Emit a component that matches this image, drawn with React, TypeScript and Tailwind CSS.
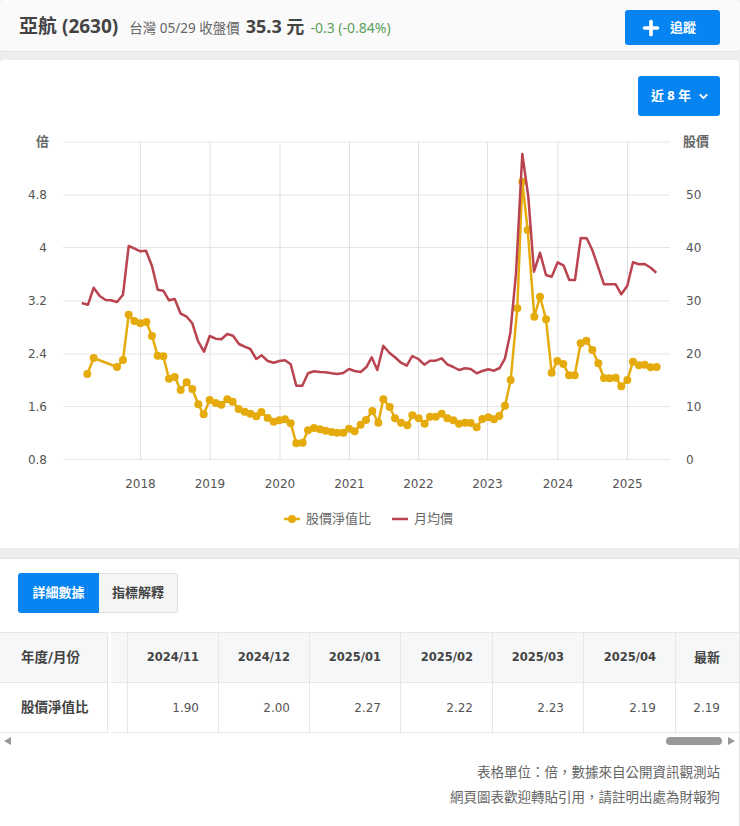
import { ChevronDown, Plus } from "lucide-react";

const cjk = "font-['DejaVu_Sans','Noto_Sans_CJK_TC',sans-serif]";

// traced from the chart, [x, y] in px
const left = (pts: number[][]) => pts.map(([x, y]) => [x / 3, 120 + y / 3]);
const right = (pts: number[][]) => pts.map(([x, y]) => [370 + x / 3, 120 + y / 3]);

const priceLine = [
  ...left([
    [245, 549], [264, 554], [281, 503], [299, 528], [317, 540], [333, 541], [351, 546], [369, 524], [386, 378], [404, 386],
    [421, 394], [438, 392], [456, 438], [473, 509], [490, 512], [507, 541], [524, 537], [542, 581], [560, 590], [577, 610],
    [594, 663], [612, 695], [629, 648], [647, 656], [664, 658], [682, 642], [699, 647], [717, 672], [734, 680], [751, 687],
    [769, 717], [785, 706], [803, 723], [821, 728], [838, 723], [855, 721], [872, 733], [889, 797], [907, 797], [924, 760],
    [942, 754], [960, 756], [977, 757], [995, 760], [1012, 762], [1030, 759], [1047, 747], [1064, 753], [1082, 756], [1100, 740],
  ]),
  ...right([
    [5, 712], [22, 750], [40, 677], [58, 698], [75, 712], [93, 728], [110, 737], [127, 708], [145, 717], [163, 734],
    [180, 722], [197, 722], [215, 715], [232, 733], [250, 741], [267, 750], [285, 745], [302, 747], [320, 760], [337, 753],
    [355, 748], [372, 752], [389, 744], [405, 715], [421, 640], [438, 460], [457, 102], [475, 230], [492, 455], [510, 398],
    [528, 465], [545, 470], [563, 427], [581, 437], [598, 480], [615, 480], [632, 354], [650, 355], [667, 390], [684, 440],
    [702, 493], [719, 493], [737, 493], [754, 523], [772, 497], [789, 427], [807, 433], [824, 432], [842, 443], [859, 458],
  ]),
];

const pbLine = [
  ...left([
    [262, 762], [281, 714], [351, 741], [369, 720], [386, 584], [403, 603], [421, 610], [439, 606], [456, 648], [473, 707],
    [490, 709], [507, 776], [524, 771], [542, 810], [560, 787], [577, 807], [595, 853], [611, 883], [629, 840], [647, 849],
    [664, 854], [682, 838], [698, 845], [716, 867], [734, 875], [751, 881], [769, 889], [784, 876], [803, 894], [821, 905],
    [838, 901], [855, 898], [872, 910], [889, 970], [908, 968], [924, 931], [942, 924], [960, 928], [977, 932], [995, 936],
    [1012, 938], [1030, 938], [1047, 926], [1064, 934], [1082, 914], [1098, 900],
  ]),
  ...right([
    [7, 873], [25, 908], [40, 838], [59, 861], [75, 895], [93, 908], [112, 916], [127, 886], [146, 895], [164, 911],
    [180, 890], [197, 890], [215, 881], [232, 895], [250, 901], [267, 911], [285, 908], [302, 909], [320, 922], [337, 897],
    [355, 892], [372, 898], [388, 888], [405, 857], [422, 780], [442, 565], [457, 185], [473, 330], [493, 590], [510, 530],
    [528, 598], [545, 758], [562, 723], [580, 732], [597, 766], [614, 766], [632, 670], [649, 662], [667, 690], [685, 730],
    [702, 774], [719, 775], [737, 773], [754, 799], [772, 780], [789, 725], [807, 736], [824, 734], [842, 742], [860, 741],
  ]),
];

const toPoints = (pts: number[][]) => pts.map(([x, y]) => `${x.toFixed(1)},${y.toFixed(1)}`).join(" ");

const gridY = [142, 195, 247.5, 301, 354, 406.5, 459.5];
const leftTicks = [
  ["4.8", 195], ["4", 247.5], ["3.2", 301], ["2.4", 354], ["1.6", 406.5], ["0.8", 459.5],
] as const;
const rightTicks = [
  ["50", 195], ["40", 247.5], ["30", 301], ["20", 354], ["10", 406.5], ["0", 459.5],
] as const;
const years = [
  ["2018", 140.5], ["2019", 210], ["2020", 280], ["2021", 349.5],
  ["2022", 418.5], ["2023", 487.5], ["2024", 558], ["2025", 627.5],
] as const;

const PbChart = () => (
  <svg viewBox="0 124 740 424" width={740} height={424} className="block" fontFamily="'DejaVu Sans','Noto Sans CJK TC',sans-serif">
    {gridY.map((y) => (
      <line key={y} x1={63} x2={670} y1={y} y2={y} stroke="#e6e6e6" strokeWidth={1} />
    ))}
    {years.map(([label, x]) => (
      <g key={label}>
        <line x1={x} x2={x} y1={142} y2={459.5} stroke="#e0e0e6" strokeWidth={1} />
        <text x={x} y={488} textAnchor="middle" fontSize={12} fill="#555">{label}</text>
      </g>
    ))}
    <text x={49} y={146} textAnchor="end" fontSize={13} fontWeight={700} fill="#666">倍</text>
    <text x={683} y={146} fontSize={13} fontWeight={700} fill="#666">股價</text>
    {leftTicks.map(([label, y]) => (
      <text key={label} x={47} y={y + 4} textAnchor="end" fontSize={12} fill="#555">{label}</text>
    ))}
    {rightTicks.map(([label, y]) => (
      <text key={label} x={686} y={y + 4} fontSize={12} fill="#555">{label}</text>
    ))}
    <polyline points={toPoints(pbLine)} fill="none" stroke="#e5ab0c" strokeWidth={2.5} strokeLinejoin="round" />
    {pbLine.map(([x, y]) => (
      <circle key={`${x}-${y}`} cx={x} cy={y} r={4} fill="#e5ab0c" />
    ))}
    <polyline points={toPoints(priceLine)} fill="none" stroke="#b9434f" strokeWidth={2.5} strokeLinejoin="round" />
    <line x1={284} x2={300} y1={519} y2={519} stroke="#e5ab0c" strokeWidth={2.5} />
    <circle cx={292} cy={519} r={4} fill="#e5ab0c" />
    <text x={306} y={523} fontSize={13} fill="#666">股價淨值比</text>
    <line x1={392} x2={408} y1={519} y2={519} stroke="#b9434f" strokeWidth={2.5} />
    <text x={414} y={523} fontSize={13} fill="#666">月均價</text>
  </svg>
);

const columns = [
  { head: "2024/11", value: "1.90", w: "w-[91px]" },
  { head: "2024/12", value: "2.00", w: "w-[91px]" },
  { head: "2025/01", value: "2.27", w: "w-[91px]" },
  { head: "2025/02", value: "2.22", w: "w-[92px]" },
  { head: "2025/03", value: "2.23", w: "w-[91px]" },
  { head: "2025/04", value: "2.19", w: "w-[92px]" },
];

const DataTable = () => (
  <div className="flex w-full text-[#444]">
    <div className="w-[108px] shrink-0 border-r border-[#e6e6e6]">
      <div className="h-[51px] flex items-center pl-[21px] bg-[#f6f7f8] border-y border-[#e6e6e6] text-[13.5px] font-bold">年度/月份</div>
      <div className="h-[50px] flex items-center pl-[21px] border-b border-[#e6e6e6] text-[13.5px] font-bold">股價淨值比</div>
    </div>
    <div className="ml-[3px] w-[17px] shrink-0 border-r border-[#e6e6e6]">
      <div className="h-[51px] bg-[#f6f7f8] border-y border-[#e6e6e6]" />
      <div className="h-[50px] border-b border-[#e6e6e6]" />
    </div>
    {columns.map((col) => (
      <div key={col.head} className={`${col.w} shrink-0 border-r border-[#e6e6e6]`}>
        <div className="h-[51px] flex items-center justify-end pr-[19px] bg-[#f6f7f8] border-y border-[#e6e6e6] text-[11.5px] font-bold">{col.head}</div>
        <div className="h-[50px] flex items-center justify-end pr-[19px] border-b border-[#e6e6e6] text-[12px] text-[#555]">{col.value}</div>
      </div>
    ))}
    <div className="flex-1">
      <div className="h-[51px] flex items-center justify-end pr-[19px] bg-[#f6f7f8] border-y border-[#e6e6e6] text-[13px] font-bold">最新</div>
      <div className="h-[50px] flex items-center justify-end pr-[19px] border-b border-[#e6e6e6] text-[12px] text-[#555]">2.19</div>
    </div>
  </div>
);

const App = () => {
  return (
    <div className={`w-[740px] h-[826px] overflow-hidden bg-[#eeeeee] ${cjk}`}>
      <div className="h-[52px] pt-px flex items-center justify-between pl-[19px] pr-5 bg-[#fafafa] border-b border-[#e2e2e2] rounded-sm font-['Noto_Sans','Noto_Sans_CJK_TC',sans-serif]">
        <div className="flex items-baseline">
          <span className="text-[19px] font-bold text-[#444]">亞航 (2630)</span>
          <span className="ml-[11px] text-[13.5px] text-[#666]">台灣 05/29 收盤價</span>
          <span className="ml-[6px] text-[18px] font-bold text-[#444]">35.3 元</span>
          <span className="ml-[6px] text-[14px] text-[#5c9f5c]">-0.3 (-0.84%)</span>
        </div>
        <button className="mt-[3px] w-[95px] h-[35px] flex items-center gap-2 pl-[15px] rounded-[3px] bg-[#0584f2] text-white text-[13px] font-bold">
          <Plus size={22} strokeWidth={4} />
          追蹤
        </button>
      </div>

      <div className="mt-2 h-[488px] bg-white border-r border-[#e6e6e6] rounded-t-sm">
        <div className="flex justify-end pt-4 pr-[19px]">
          <button className="w-[82px] h-10 pl-[3px] flex items-center justify-center gap-[6px] rounded-[3px] bg-[#0584f2] text-white text-[13px] font-bold font-['Noto_Sans','Noto_Sans_CJK_TC',sans-serif]">
            近 8 年
            <ChevronDown size={13} strokeWidth={3.5} />
          </button>
        </div>
        <div className="mt-2">
          <PbChart />
        </div>
      </div>

      <div className="mt-[10px] h-[268px] bg-white border-t border-r border-[#e2e2e2]">
        <div className="flex pt-[14px] pl-[18px]">
          <div className="w-[81px] h-10 flex items-center justify-center rounded-l-[3px] bg-[#0584f2] text-white text-[13px] font-bold">詳細數據</div>
          <div className="w-[79px] h-10 flex items-center justify-center rounded-r-[3px] bg-[#f5f5f5] border border-l-0 border-[#e0e0e0] text-[#444] text-[13px] font-bold">指標解釋</div>
        </div>
        <div className="mt-[19px]">
          <DataTable />
        </div>
        <div className="h-[15px] flex items-center pl-1 pr-1">
          <span className="w-0 h-0 border-y-[4px] border-y-transparent border-r-[7px] border-r-[#999]" />
          <span className="ml-auto w-[56px] h-2 rounded-full bg-[#999]" />
          <span className="ml-[6px] w-0 h-0 border-y-[4px] border-y-transparent border-l-[7px] border-l-[#999]" />
        </div>
        <div className="mt-[11px] pr-[19px] text-right text-[13.5px] leading-[25px] text-[#666] font-['Noto_Sans_CJK_TC',sans-serif]">
          <p>{"表格單位\uFF1A倍\uFF0C數據來自公開資訊觀測站"}</p>
          <p>{"網頁圖表歡迎轉貼引用\uFF0C請註明出處為財報狗"}</p>
        </div>
      </div>
    </div>
  );
};

export default App;
